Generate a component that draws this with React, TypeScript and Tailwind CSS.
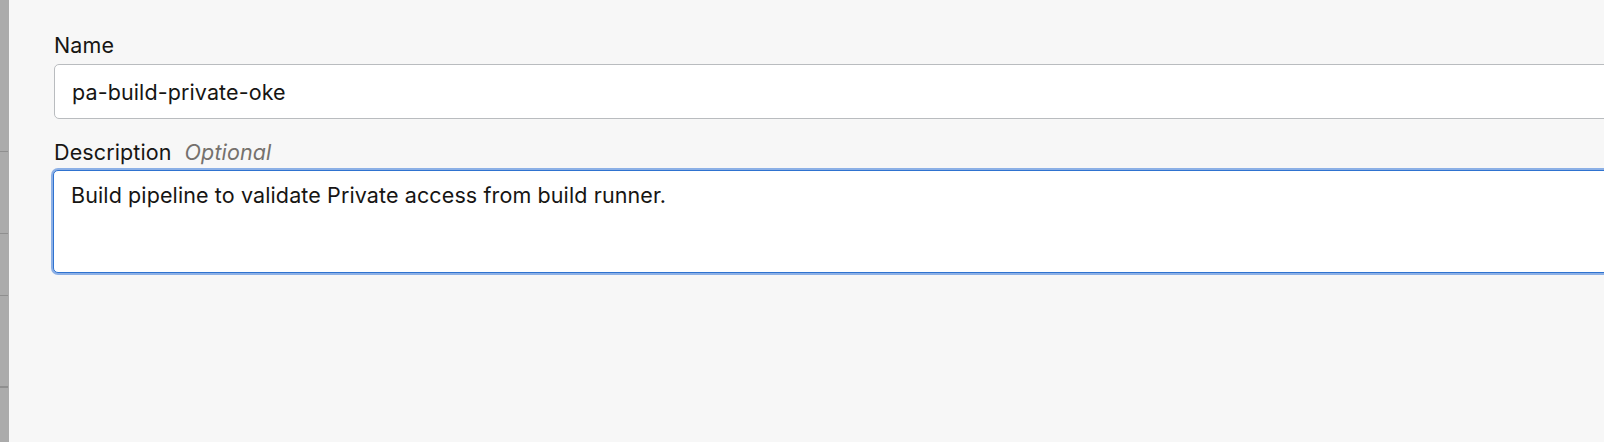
export default function App() {
  return (
    <div className="flex h-[442px] w-[1604px] overflow-hidden bg-[#f7f7f7] font-['Inter',sans-serif] text-[#161513] tracking-[0.007em]">
      {/* Left nav edge (clipped) */}
      <div className="relative w-[9px] shrink-0 overflow-hidden bg-[#ababab]">
        <span className="absolute left-[-12px] top-[92px] text-[21px] leading-[26px] text-[#3a3a3a]">ii</span>
        <div className="absolute left-0 top-[151px] h-px w-[8px] bg-[#8f8f8f]" />
        <div className="absolute left-0 top-[233px] h-px w-[8px] bg-[#8f8f8f]" />
        <div className="absolute left-0 top-[295px] h-px w-[8px] bg-[#8f8f8f]" />
        <div className="absolute left-0 top-[386px] h-[2px] w-[8px] bg-[#8f8f8f]" />
      </div>

      {/* Form */}
      <div className="flex min-w-0 flex-1 flex-col pl-[45px] pt-[32px]">
        <label className="text-[21.5px] leading-[26px]">Name</label>
        <div className="mt-[6px] flex h-[55px] w-[1600px] shrink-0 items-center rounded-[5px] border border-[#b9bcbf] bg-white pl-[17px] pt-[2px] text-[21.5px] text-[#161513]">
          pa-build-private-oke
        </div>

        <div className="mt-[20px] flex items-baseline gap-[13px] text-[21.5px] leading-[26px]">
          <span>Description</span>
          <span className="italic text-[#75716d]">Optional</span>
        </div>
        <div className="mt-[5px] ml-[-1px] h-[103px] w-[1600px] shrink-0 rounded-[5px] border-[1.5px] border-[#2f73d0] bg-white pl-[17px] pt-[11px] text-[21.5px] leading-[26px] text-[#161513] shadow-[0_0_0_2px_#8cb0e6]">
          Build pipeline to validate Private access from build runner.
        </div>
      </div>
    </div>
  )
}
